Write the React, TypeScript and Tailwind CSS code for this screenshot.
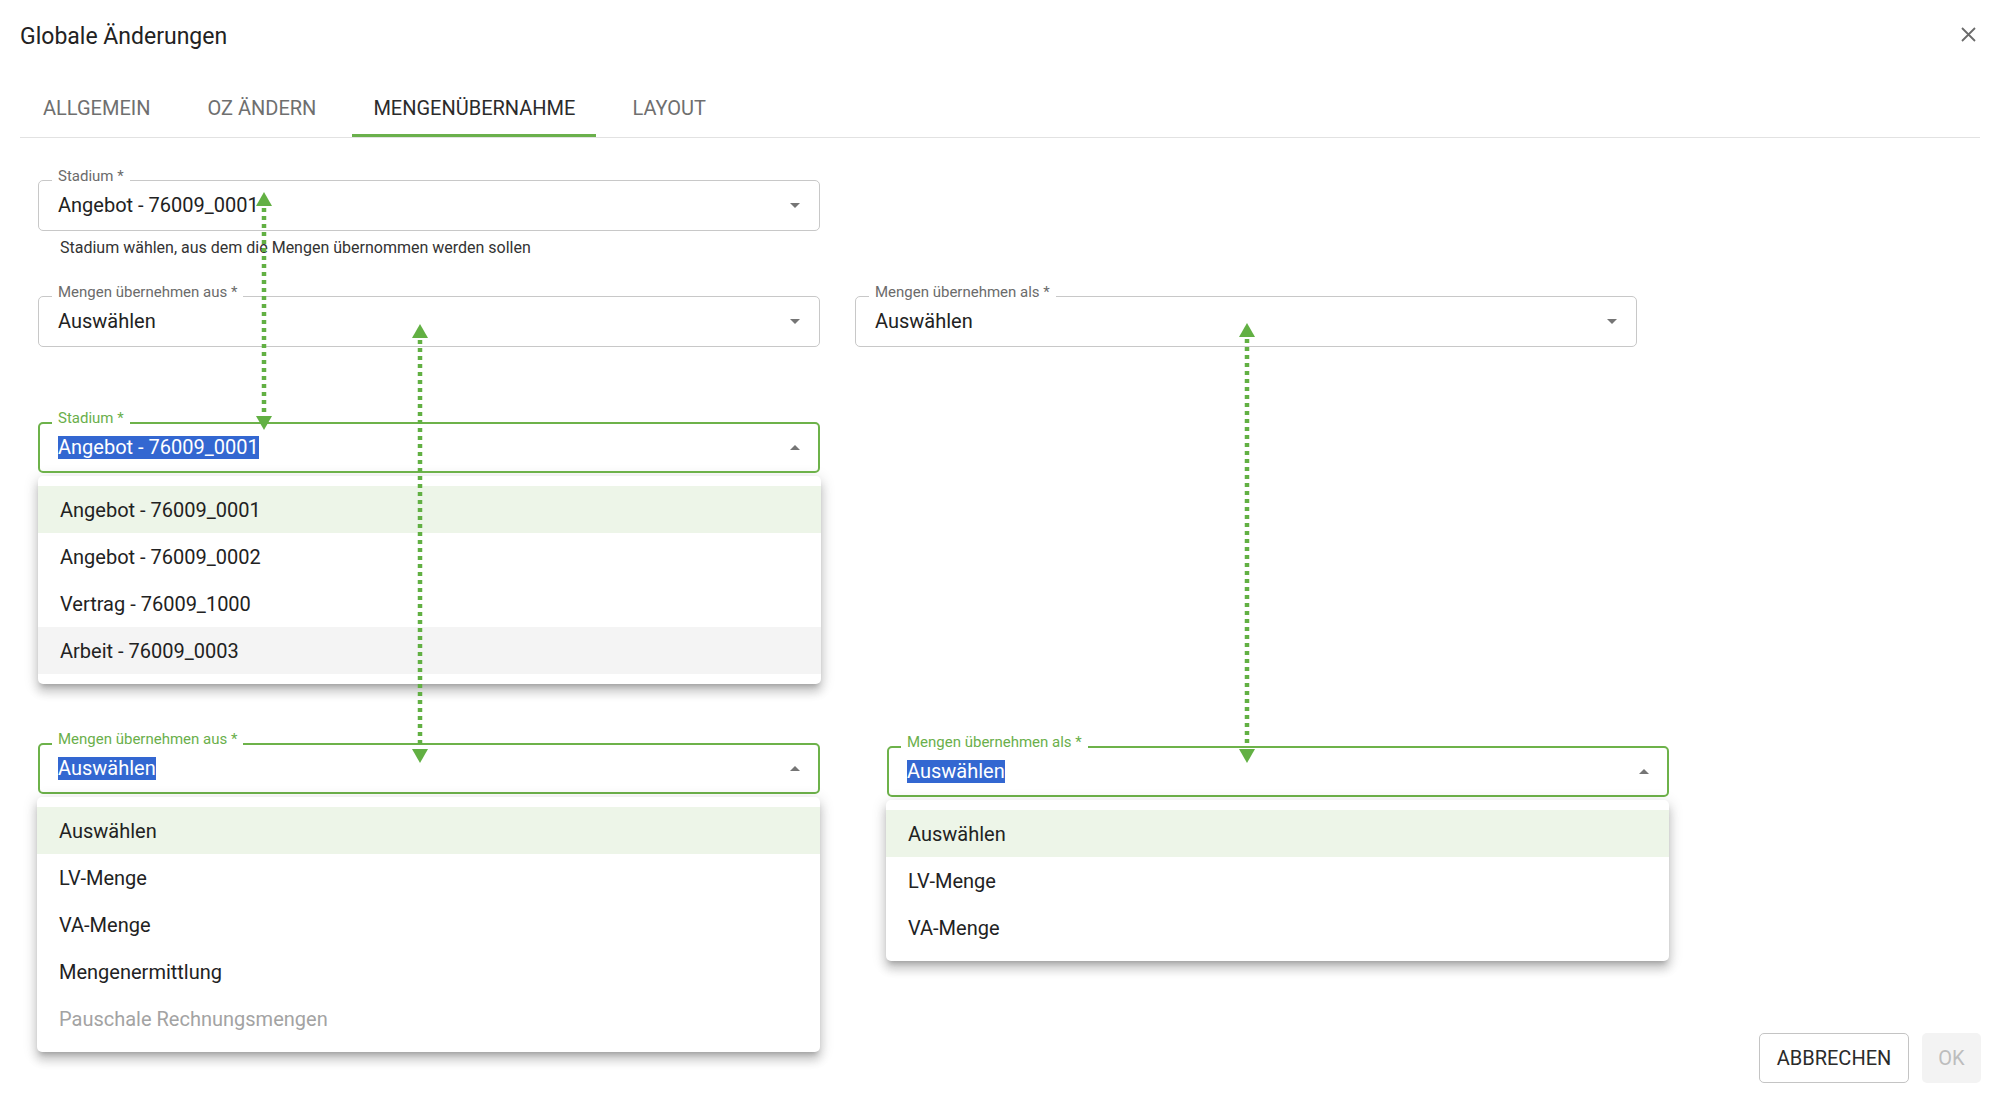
import React from "react";

type Option = {
  label: string;
  active?: boolean;
  hover?: boolean;
  disabled?: boolean;
};

const stadien: Option[] = [
  { label: "Angebot - 76009_0001", active: true },
  { label: "Angebot - 76009_0002" },
  { label: "Vertrag - 76009_1000" },
  { label: "Arbeit - 76009_0003", hover: true },
];

const quellen: Option[] = [
  { label: "Auswählen", active: true },
  { label: "LV-Menge" },
  { label: "VA-Menge" },
  { label: "Mengenermittlung" },
  { label: "Pauschale Rechnungsmengen", disabled: true },
];

const ziele: Option[] = [
  { label: "Auswählen", active: true },
  { label: "LV-Menge" },
  { label: "VA-Menge" },
];

function Caret({ up }: { up?: boolean }) {
  return (
    <svg width="10" height="5" viewBox="0 0 10 5">
      <path d={up ? "M0 5h10L5 0z" : "M0 0h10L5 5z"} fill="#757575" />
    </svg>
  );
}

function Field({
  label,
  value,
  focused,
}: {
  label: string;
  value: string;
  focused?: boolean;
}) {
  return (
    <div
      className={
        focused
          ? "relative flex h-[51px] w-[782px] items-center justify-between rounded-[5px] border-2 border-[#6db24a] pl-[18px] pr-[18px]"
          : "relative flex h-[51px] w-[782px] items-center justify-between rounded-[5px] border border-[#c8c8c8] pl-[19px] pr-[19px]"
      }
    >
      <span
        className={
          focused
            ? "absolute -top-[15px] left-[12px] bg-white px-[6px] text-[15px] leading-[18px] text-[#6aaf4b]"
            : "absolute -top-[14px] left-[13px] bg-white px-[6px] text-[15px] leading-[18px] text-[#6b6b6b]"
        }
      >
        {label}
      </span>

      {focused ? (
        <span className="bg-[#3367d1] text-[20px] leading-[23px] text-white">
          {value}
        </span>
      ) : (
        <span className="text-[20px] leading-[23px] text-[#222]">{value}</span>
      )}

      <Caret up={focused} />
    </div>
  );
}

function Menu({ items, floating }: { items: Option[]; floating?: boolean }) {
  return (
    <div
      className={
        (floating ? "absolute -left-px top-full z-10 mt-[3px] " : "mt-[3px] ") +
        "w-[783px] rounded-[5px] bg-white py-[10px] shadow-[0_5px_5px_-3px_rgba(0,0,0,0.2),0_8px_10px_1px_rgba(0,0,0,0.14),0_3px_14px_2px_rgba(0,0,0,0.12)]"
      }
    >
      {items.map((item) => (
        <div
          key={item.label}
          className={
            "flex h-[47px] items-center pl-[22px] text-[20px] " +
            (item.active ? "bg-[#edf5e8] " : item.hover ? "bg-[#f4f4f4] " : "") +
            (item.disabled ? "text-[#a3a3a3]" : "text-[#222]")
          }
        >
          {item.label}
        </div>
      ))}
    </div>
  );
}

function Arrow({ x, y1, y2 }: { x: number; y1: number; y2: number }) {
  return (
    <g fill="#62b043">
      <line
        x1={x}
        y1={y1 + 16}
        x2={x}
        y2={y2 - 16}
        stroke="#62b043"
        strokeWidth={4.5}
        strokeDasharray="4 4"
      />
      <path d={`M${x} ${y1}L${x + 8} ${y1 + 14}L${x - 8} ${y1 + 14}Z`} />
      <path d={`M${x} ${y2}L${x + 8} ${y2 - 14}L${x - 8} ${y2 - 14}Z`} />
    </g>
  );
}

const tabs = ["ALLGEMEIN", "OZ ÄNDERN", "MENGENÜBERNAHME", "LAYOUT"];

export default function App() {
  return (
    <div className="relative flex h-[1100px] w-[2000px] flex-col overflow-hidden bg-white font-[Roboto,sans-serif]">
      {/* Header */}
      <div className="flex h-[78px] items-start justify-between pl-[20px] pr-[24px]">
        <h2 className="pt-[23px] text-[23px] leading-[28px] text-[#222]">
          Globale Änderungen
        </h2>
        <svg width="15" height="15" viewBox="0 0 15 15" className="mt-[27px]">
          <path d="M1 1l13 13M14 1L1 14" stroke="#6b6b6b" strokeWidth="1.8" />
        </svg>
      </div>

      {/* Tabs */}
      <div className="mx-[20px] flex gap-[15px] border-b border-[#e2e2e2] pl-[2px]">
        {tabs.map((tab) => {
          const active = tab === "MENGENÜBERNAHME";
          return (
            <div
              key={tab}
              className={
                active
                  ? "relative flex h-[59px] items-center px-[21px] text-[20px] text-[#2b2b2b]"
                  : "relative flex h-[59px] items-center px-[21px] text-[20px] text-[#6f6f6f]"
              }
            >
              {tab}
              {active && (
                <span className="absolute inset-x-0 bottom-0 h-[3px] bg-[#6ab04c]" />
              )}
            </div>
          );
        })}
      </div>

      {/* Body */}
      <div className="flex flex-col px-[38px] pt-[42px]">
        <Field label="Stadium *" value="Angebot - 76009_0001" />
        <p className="ml-[22px] mt-[7px] text-[16px] leading-[19px] text-[#333]">
          Stadium wählen, aus dem die Mengen übernommen werden sollen
        </p>

        <div className="mt-[39px] flex gap-[35px]">
          <Field label="Mengen übernehmen aus *" value="Auswählen" />
          <Field label="Mengen übernehmen als *" value="Auswählen" />
        </div>

        <div className="mt-[75px]">
          <Field label="Stadium *" value="Angebot - 76009_0001" focused />
          <Menu items={stadien} />
        </div>

        <div className="mt-[59px] flex items-start">
          <div className="relative">
            <Field label="Mengen übernehmen aus *" value="Auswählen" focused />
            <Menu items={quellen} floating />
          </div>
          <div className="relative ml-[67px] mt-[3px]">
            <Field label="Mengen übernehmen als *" value="Auswählen" focused />
            <Menu items={ziele} floating />
          </div>
        </div>
      </div>

      {/* Footer */}
      <div className="mt-auto flex justify-end gap-[13px] pb-[17px] pr-[19px]">
        <button className="h-[50px] w-[150px] rounded-[5px] border border-[#c4c4c4] text-[20px] text-[#2b2b2b]">
          ABBRECHEN
        </button>
        <button className="h-[50px] w-[59px] rounded-[5px] bg-[#f3f3f3] text-[20px] text-[#bdbdbd]">
          OK
        </button>
      </div>

      {/* Annotation arrows */}
      <svg
        className="pointer-events-none absolute inset-0 z-20"
        width="2000"
        height="1100"
        viewBox="0 0 2000 1100"
      >
        <Arrow x={264} y1={192} y2={430} />
        <Arrow x={420} y1={324} y2={763} />
        <Arrow x={1247} y1={323} y2={763} />
      </svg>
    </div>
  );
}
